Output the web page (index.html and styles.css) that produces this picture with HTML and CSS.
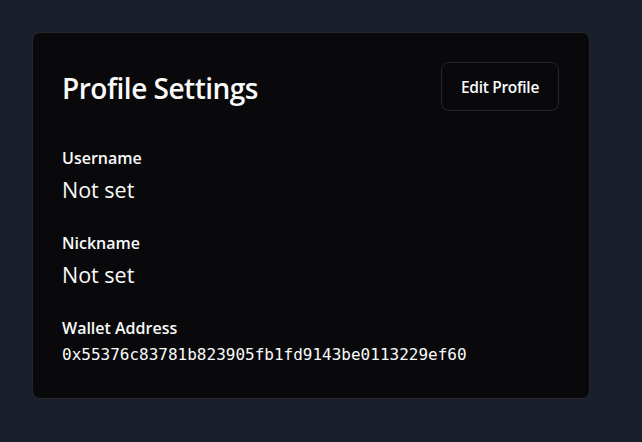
FILE: index.html
```html
<!DOCTYPE html>
<html>
<head>
<meta charset="utf-8">
<link rel="stylesheet" href="styles.css">
</head>
<body>
<div class="card">
  <div class="header">
    <h1 class="title">Profile Settings</h1>
    <button class="btn">Edit Profile</button>
  </div>
  <div class="fields">
    <div class="field">
      <div class="label">Username</div>
      <div class="value">Not set</div>
    </div>
    <div class="field">
      <div class="label">Nickname</div>
      <div class="value">Not set</div>
    </div>
    <div class="field">
      <div class="label">Wallet Address</div>
      <div class="mono">0x55376c83781b823905fb1fd9143be0113229ef60</div>
    </div>
  </div>
</div>
</body>
</html>
```
FILE: styles.css
```css
html, body {
  margin: 0;
  padding: 0;
}
body {
  background: #1a1f2e;
  font-family: "Open Sans", "Noto Sans", sans-serif;
  color: #fafafa;
  padding: 32px;
  width: 558px;
}
.card {
  background: #09090b;
  border: 1px solid #27272a;
  border-radius: 8px;
  padding: 29px 30px 31px 29px;
}
.header {
  display: flex;
  justify-content: space-between;
  align-items: center;
}
.title {
  margin: 0;
  font-size: 28px;
  font-weight: 600;
  letter-spacing: -0.5px;
  position: relative;
  top: 1px;
}
.btn {
  background: transparent;
  color: #fafafa;
  border: 1px solid #27272a;
  border-radius: 8px;
  height: 49px;
  width: 118px;
  font-family: inherit;
  font-size: 15.5px;
  font-weight: 600;
  letter-spacing: -0.3px;
  cursor: pointer;
}
.fields {
  display: flex;
  flex-direction: column;
  gap: 27px;
  margin-top: 35px;
}
.label {
  font-size: 16px;
  font-weight: 600;
  line-height: 24px;
}
.value {
  font-size: 21.5px;
  line-height: 28px;
  margin-top: 6px;
}
.mono {
  font-family: "DejaVu Sans Mono", monospace;
  font-size: 16px;
  line-height: 24px;
  margin-top: 3px;
}
```
